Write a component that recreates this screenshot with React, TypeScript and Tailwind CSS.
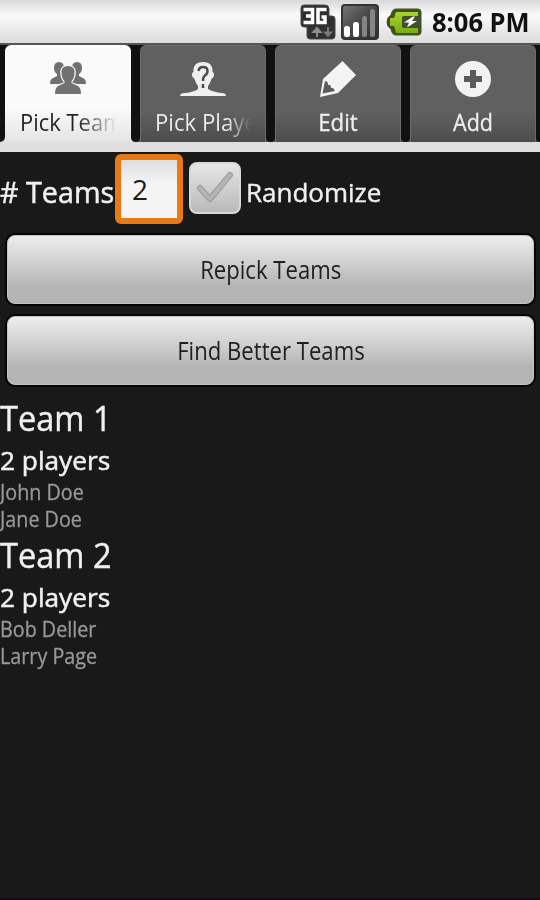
import type { ReactNode } from "react";

function NetworkIcon() {
  return (
    <svg width="36" height="36" viewBox="0 0 36 36" className="shrink-0">
      <path d="M4 1H25Q29 1 29 5V12H32Q35 12 35 15V32Q35 35 32 35H10Q7 35 7 32V23H4Q1 23 1 20V4Q1 1 4 1Z" fill="#303030" stroke="#484848" />
      <path d="M3.5 5.5H12.5V18.5H3.5M6 12H12.5" fill="none" stroke="#fff" strokeWidth="3.5" />
      <path d="M26.5 5.5H18V18.5H25V13H21.5" fill="none" stroke="#fff" strokeWidth="3.5" />
      <path d="M17 33V26M13.5 28L17 24L20.500 28Z" fill="#8c8c8c" stroke="#8c8c8c" strokeWidth="2" />
      <path d="M28 23V29M25 28.500L28 32L31 28.500Z" fill="#777" stroke="#777" strokeWidth="2" />
    </svg>
  );
}

function SignalIcon() {
  return (
    <svg width="38" height="36" viewBox="0 0 38 36" className="shrink-0">
      <defs>
        <linearGradient id="sig" x1="0" y1="0" x2="1" y2="1">
          <stop offset="0" stopColor="#777" />
          <stop offset=".5" stopColor="#484848" />
          <stop offset="1" stopColor="#303030" />
        </linearGradient>
      </defs>
      <rect x="1" y="1" width="36" height="34" rx="3" fill="url(#sig)" stroke="#333" strokeWidth="2" />
      <rect x="3" y="22" width="6" height="11" rx="2.5" fill="#fff" />
      <rect x="12" y="18" width="6" height="15" rx="2.5" fill="#fff" />
      <rect x="21" y="12" width="5" height="21" rx="2.5" fill="#858585" />
      <rect x="29" y="5" width="5" height="28" rx="2.5" fill="#858585" />
    </svg>
  );
}

function BatteryIcon() {
  return (
    <svg width="36" height="28" viewBox="0 0 36 28" className="shrink-0">
      <defs>
        <linearGradient id="bat" x1="0" y1="0" x2="0" y2="1">
          <stop offset="0" stopColor="#a6d52b" />
          <stop offset="1" stopColor="#78ad0d" />
        </linearGradient>
      </defs>
      <path d="M10 1H32Q35 1 35 4V24Q35 27 32 27H10Q6 27 5 21Q1 19 1 14Q1 9 5 7Q6 1 10 1Z" fill="#3c5219" stroke="#45502f" />
      <path d="M10 4H32V8H19Q16 8 16 11V17Q16 20 19 20H32V25H10L8 18H4V10H8Z" fill="url(#bat)" />
      <rect x="16" y="8" width="17" height="12" rx="2" fill="#454d35" />
      <path d="M27 8.500L18 14.500H23L21 19.500L31 13H26L29 8.500Z" fill="#fff" />
    </svg>
  );
}

function GroupIcon() {
  return (
    <svg width="38" height="34" viewBox="0 0 38 34" fill="#717171">
      <path d="M10 1Q15 1 15 7Q15 11 12 13V15L17 18V23H1Q1 18 4 17L8 15V13Q5 11 5 7Q5 1 10 1Z" />
      <path d="M28 1Q23 1 23 7Q23 11 26 13V15L21 18V23H37Q37 18 34 17L30 15V13Q33 11 33 7Q33 1 28 1Z" />
      <path d="M19 5Q26 5 25.500 12Q25 18 22.500 20V22L29 25Q32 27 32 33H6Q6 27 9 25L15.500 22V20Q13 18 12.500 12Q12 5 19 5Z" stroke="#f8f8f8" strokeWidth="2.500" paintOrder="stroke" />
    </svg>
  );
}

function UnknownIcon() {
  return (
    <svg width="48" height="36" viewBox="0 0 48 36">
      <path d="M24 1C31 1 34 5 33.500 11Q36 12 34.500 16L32.500 18Q31 23 29 25V28Q34 31 43 32Q47 32 47 35H1Q1 32 6 32Q15 31 19 28V25Q17 23 15.500 18L13.500 16Q12 12 14.500 11C14 5 17 1 24 1Z" fill="#efefef" />
      <path d="M19.500 10Q20 6 24 6Q28.500 6 28.500 10Q28.500 13 25.500 15Q24 16 24 20M24 23V27" fill="none" stroke="#4d4d4d" strokeWidth="2.5" />
    </svg>
  );
}

function PencilIcon() {
  return (
    <svg width="38" height="38" viewBox="0 0 38 38">
      <path d="M23.500 1L37 15L19 33L1 37L4 19Z" fill="#f4f4f4" />
      <path d="M6 21L3.500 33.500L16 31Q14 27 12 28Q12 24 9 25Q9 21 6 21Z" fill="#5b5b5b" />
    </svg>
  );
}

function AddIcon() {
  return (
    <svg width="38" height="38" viewBox="0 0 38 38">
      <circle cx="19" cy="19" r="18" fill="#f2f2f2" />
      <path d="M19 10V28M10 19H28" stroke="#5b5b5b" strokeWidth="6" />
    </svg>
  );
}

function Tab({ icon, label, active = false }: { icon: ReactNode; label: ReactNode; active?: boolean }) {
  return (
    <div
      className={
        active
          ? "flex h-[97px] w-[126px] flex-col items-center rounded-t-md bg-linear-to-b from-[#fafafa] from-65% to-[#e4e4e4]"
          : "flex h-[97px] w-[126px] flex-col items-center rounded-t-md border-x border-t border-[#6b6b6b] bg-linear-to-b from-[#606060] from-70% to-[#4c4c4c]"
      }
    >
      <div className={active ? "flex h-[61px] items-center justify-center pt-[5px]" : "flex h-[60px] items-center justify-center pt-[5px]"}>{icon}</div>
      <div className="h-[34px] w-24 overflow-hidden text-[23.6px] leading-[32px]">{label}</div>
    </div>
  );
}

/* Dark notch between two tabs; its rounded foot lets the tabs flare outwards. */
function Notch({ side }: { side: "first" | "second" | "inner" }) {
  return (
    <div
      className={
        side === "first"
          ? "h-full w-[5px] bg-[#e0e0e0]"
          : side === "second"
            ? "h-full w-[9px] bg-linear-to-r from-[#e0e0e0] from-50% to-[#4c4c4c] to-50%"
            : "h-full w-[9px] bg-[#4c4c4c]"
      }
    >
      <div className={side === "first" ? "h-full rounded-br-[5px] bg-[#111]" : "h-full rounded-b-[5px] bg-[#111]"} />
    </div>
  );
}

function ActionButton({ children }: { children: ReactNode }) {
  return (
    <button className="flex h-[69px] w-full items-center justify-center rounded-lg border border-[#c4c4c4] bg-linear-to-b from-[#ededed] via-[#cccccc] via-45% to-[#b4b4b4] to-75% text-[25px] text-[#202020] shadow-[0_0_0_2px_#050505]">
      {children}
    </button>
  );
}

function Team({ name, players }: { name: string; players: string[] }) {
  return (
    <section className="h-[137px] whitespace-nowrap">
      <h2 className="h-[44px] text-[35px] leading-[40px] text-[#f0f0f0]">
        <span className="inline-block origin-left scale-x-[.93] [-webkit-text-stroke:.4px]">{name}</span>
      </h2>
      <p className="h-[37px] text-[25px] leading-[36px] text-[#f0f0f0]">
        <span className="inline-block origin-left scale-x-[1.05] [-webkit-text-stroke:.5px]">2 players</span>
      </p>
      {players.map((player) => (
        <p key={player} className="h-[27px] text-[21px] leading-[26px] text-[#989898]">
          <span className="inline-block origin-left scale-x-[.94] [-webkit-text-stroke:.3px]">{player}</span>
        </p>
      ))}
    </section>
  );
}

export default function App() {
  return (
    <div className="flex h-[900px] w-[540px] flex-col overflow-hidden border-b-2 border-[#120d10] bg-[#191919] font-['Open_Sans',sans-serif]">
      <header className="flex h-[43px] shrink-0 items-center justify-end bg-linear-to-b from-[#d8d8d8] via-[#fafafa] via-35% to-[#dcdcdc] pr-[11px] text-[26px] font-bold text-[#111]">
        <NetworkIcon />
        <span className="w-[5px]" />
        <SignalIcon />
        <span className="w-[7px]" />
        <BatteryIcon />
        <span className="w-[10px]" />
        <span className="flex w-[97px] pt-px whitespace-nowrap"><span className="origin-left scale-x-[.98]">8:06 PM</span></span>
      </header>

      <nav className="h-[109px] shrink-0 border-t-2 border-[#555] bg-[#111]">
        <div className="flex h-[97px]">
          <Notch side="first" />
          <Tab
            active
            icon={<GroupIcon />}
            label={<span className="block w-[104px] origin-left scale-x-[.93] bg-linear-to-r from-[#222] from-60% to-transparent bg-clip-text whitespace-nowrap text-transparent">Pick Team</span>}
          />
          <Notch side="second" />
          <Tab
            icon={<UnknownIcon />}
            label={<span className="block w-[102px] origin-left scale-x-[.94] bg-linear-to-r from-[#eee] from-75% to-transparent bg-clip-text whitespace-nowrap text-transparent">Pick Players</span>}
          />
          <Notch side="inner" />
          <Tab icon={<PencilIcon />} label={<span className="block scale-x-[.94] text-center text-[#eee] [-webkit-text-stroke:.3px]">Edit</span>} />
          <Notch side="inner" />
          <Tab icon={<AddIcon />} label={<span className="block scale-x-[.91] text-center text-[#eee] [-webkit-text-stroke:.3px]">Add</span>} />
          <div className="grow bg-[#4c4c4c]">
            <div className="h-full rounded-bl-[4px] bg-[#111]" />
          </div>
        </div>
        <div className="h-[10px] bg-[#dedede]" />
      </nav>

      <main className="flex flex-col">
        <div className="flex h-[83px] items-start text-[#f0f0f0]">
          <label className="h-[83px] w-[115px] text-[29px] leading-[80px] whitespace-nowrap">
            <span className="inline-block origin-left scale-x-[.99] [-webkit-text-stroke:.5px]"># Teams</span>
          </label>
          <div className="mt-[2px] flex h-[70px] w-[68px] items-center rounded-md border-6 border-[#e87a16] bg-linear-to-b from-[#dedede] via-[#f4f4f4] via-40% to-[#f4f4f4] pb-px pl-[11px] text-[28px] text-[#1c1c1c]">
            2
          </div>
          <div className="mt-[10px] ml-[6px] flex size-[52px] items-center justify-center rounded-lg border-2 border-[#d8d8d8] bg-linear-to-b from-[#e6e6e6] to-[#b9b9b9]">
            <svg width="38" height="36" viewBox="0 0 38 36">
              <path d="M4 18L14 29L34 5" fill="none" stroke="#9c9c9c" strokeWidth="6" strokeLinecap="round" strokeLinejoin="round" />
              <path d="M4 18L14 29L34 5" fill="none" stroke="#b4b4b4" strokeWidth="4" strokeLinecap="round" strokeLinejoin="round" />
            </svg>
          </div>
          <span className="ml-[5px] text-[25px] leading-[80px]">
            <span className="inline-block origin-left scale-x-[1.04] [-webkit-text-stroke:.4px]">Randomize</span>
          </span>
        </div>
        <div className="flex flex-col gap-3 pr-[6px] pl-[7px]">
          <ActionButton><span className="scale-x-[.885]">Repick Teams</span></ActionButton>
          <ActionButton><span className="scale-x-[.885]">Find Better Teams</span></ActionButton>
        </div>
        <div className="mt-[13px]">
          <Team name="Team 1" players={["John Doe", "Jane Doe"]} />
          <Team name="Team 2" players={["Bob Deller", "Larry Page"]} />
        </div>
      </main>
    </div>
  );
}
